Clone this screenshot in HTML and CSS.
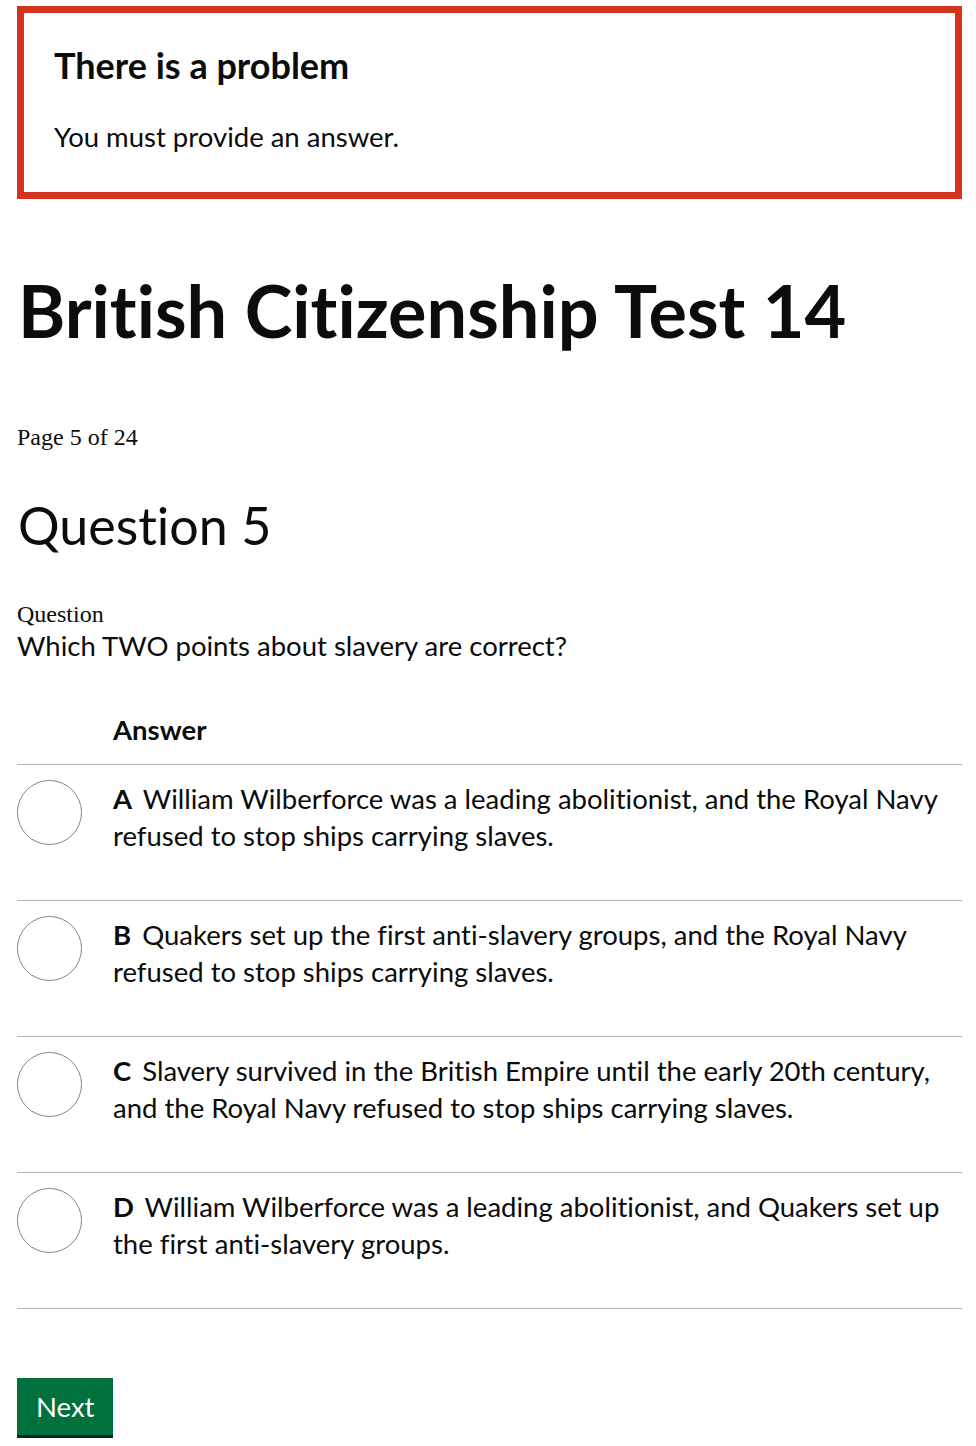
FILE: index.html
```html
<!DOCTYPE html>
<html lang="en">
<head>
<meta charset="utf-8">
<title>British Citizenship Test 14</title>
<link rel="stylesheet" href="styles.css">
</head>
<body>
<div class="page">
  <div class="error-summary" role="alert">
    <h2 class="error-title">There is a problem</h2>
    <p class="error-body">You must provide an answer.</p>
  </div>

  <h1 class="title">British Citizenship Test 14</h1>

  <p class="page-count">Page 5 of 24</p>

  <h2 class="question-heading">Question 5</h2>

  <div class="question">
    <span class="question-label">Question</span>
    <p class="question-text">Which TWO points about slavery are correct?</p>
  </div>

  <div class="answers">
    <div class="answers-head">
      <span class="head-spacer"></span>
      <span class="head-label">Answer</span>
    </div>
    <label class="answer">
      <span class="radio"></span>
      <span class="answer-text"><b>A</b> William Wilberforce was a leading abolitionist, and the Royal Navy refused to stop ships carrying slaves.</span>
    </label>
    <label class="answer">
      <span class="radio"></span>
      <span class="answer-text"><b>B</b> Quakers set up the first anti-slavery groups, and the Royal Navy refused to stop ships carrying slaves.</span>
    </label>
    <label class="answer">
      <span class="radio"></span>
      <span class="answer-text"><b>C</b> Slavery survived in the British Empire until the early 20th century, and the Royal Navy refused to stop ships carrying slaves.</span>
    </label>
    <label class="answer">
      <span class="radio"></span>
      <span class="answer-text"><b>D</b> William Wilberforce was a leading abolitionist, and Quakers set up the first anti-slavery groups.</span>
    </label>
  </div>

  <button class="button" type="button">Next</button>
</div>
</body>
</html>
```

FILE: styles.css
```css
html, body {
  margin: 0;
  padding: 0;
  background: #ffffff;
}

body {
  color: #0b0c0c;
  font-family: Lato, "Liberation Sans", Arial, sans-serif;
  font-variant-ligatures: none;
}

.page {
  padding: 6px 14px 0 17px;
}

.error-summary {
  border: 7px solid #d4351c;
  padding: 30px 30px 37px 30px;
}

.error-title {
  margin: 0 0 30px 0;
  font-size: 36px;
  line-height: 45px;
  font-weight: 700;
}

.error-body {
  margin: 0;
  font-size: 27.5px;
  line-height: 37px;
}

.title {
  margin: 74px 0 0 1px;
  font-size: 72px;
  line-height: 75px;
  font-weight: 700;
}

.page-count {
  margin: 75px 0 0 0;
  font-family: "Liberation Serif", "Times New Roman", serif;
  font-size: 24px;
  line-height: 28px;
}

.question-heading {
  margin: 44px 0 0 1px;
  font-size: 52px;
  line-height: 60px;
  font-weight: 400;
}

.question {
  margin-top: 45px;
}

.question-label {
  display: block;
  font-family: "Liberation Serif", "Times New Roman", serif;
  font-size: 24px;
  line-height: 28px;
}

.question-text {
  margin: 0;
  font-size: 27.5px;
  line-height: 36px;
}

.answers {
  margin-top: 33px;
}

.answers-head {
  display: flex;
  padding: 14px 0 15px 0;
  border-bottom: 1px solid #b1b4b6;
}

.head-spacer {
  width: 96px;
  flex: none;
}

.head-label {
  font-size: 27.5px;
  line-height: 37.5px;
  font-weight: 700;
}

.answer {
  display: flex;
  align-items: flex-start;
  padding: 15px 0 0 0;
  height: 120px;
  border-bottom: 1px solid #b1b4b6;
  cursor: pointer;
}

.radio {
  flex: none;
  box-sizing: border-box;
  width: 65px;
  height: 65px;
  margin: 0 31px 0 0;
  border: 1.5px solid #858585;
  border-radius: 50%;
  background: #ffffff;
}

.answer-text {
  font-size: 27.5px;
  line-height: 37.5px;
}

.answer-text b {
  font-weight: 700;
  margin-right: 4px;
}

.button {
  display: inline-block;
  margin: 69px 0 30px 0;
  padding: 12px 19px 10.5px 19px;
  border: 0;
  border-radius: 0;
  background: #00703c;
  box-shadow: 0 3px 0 #002d18;
  color: #ffffff;
  font-family: Lato, "Liberation Sans", Arial, sans-serif;
  font-size: 27.5px;
  line-height: 34.5px;
  cursor: pointer;
}
```
